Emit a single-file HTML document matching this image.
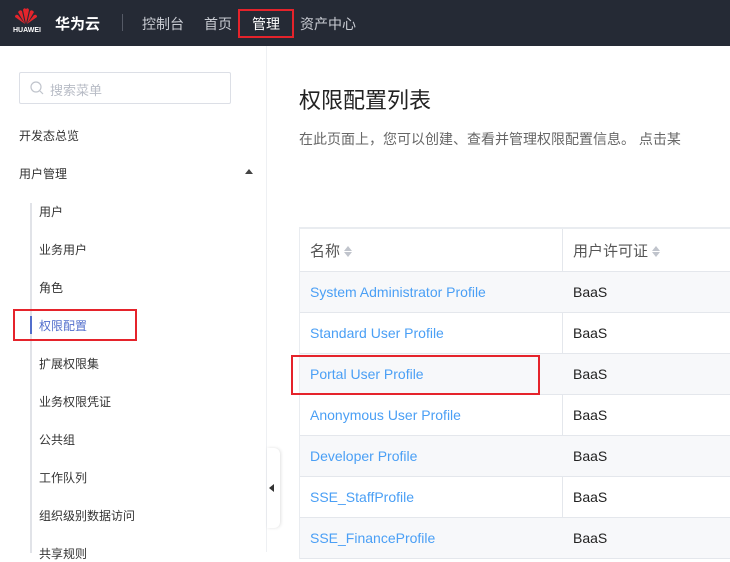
<!DOCTYPE html>
<html><head><meta charset="utf-8"><style>
*{margin:0;padding:0;box-sizing:border-box}
body{width:730px;height:552px;overflow:hidden;background:#fff;font-family:"Liberation Sans","Noto Sans CJK SC",sans-serif;position:relative}
.hd{position:absolute;left:0;top:0;width:730px;height:46px;background:#252a35;color:#c9ccd3;font-size:14px}
.hd span{position:absolute;top:14px}
.sb{position:absolute;left:0;top:46px;width:267px;height:506px;background:#fff;border-right:1px solid #eef0f3}
.it{position:absolute;font-size:12px;color:#333}
.red{position:absolute;border:2px solid #e5232b}
.tbl{position:absolute;left:299px;top:227px;width:431px;border-top:2px solid #e9ecf0;border-left:1px solid #e9ecf0}
.r{height:41px;border-bottom:1px solid #e4e7ec;position:relative;font-size:14px}
.r.g{background:#f7f8fa}
.r div{position:absolute;top:12px}
.c1{left:10px;color:#4a9ff5}
.c2{left:273px;color:#222}
.vl{position:absolute;left:262px;top:0;bottom:0;border-left:1px solid #e4e7ec}
.srt{display:inline-block;vertical-align:middle;margin-left:4px;width:9px;height:12px;position:relative}
.srt:before{content:"";position:absolute;left:0;top:0;border:4.5px solid transparent;border-bottom:5px solid #c0c4cc;border-top:0}
.srt:after{content:"";position:absolute;left:0;top:6px;border:4.5px solid transparent;border-top:5px solid #c0c4cc;border-bottom:0}
</style></head><body>
<div class="hd">
<svg style="position:absolute;left:13px;top:6px" width="26" height="20" viewBox="0 0 26 20"><g fill="#e4252c"><path d="M13 18 L10 4 Q11 1 13 3Z"/><path d="M13 18 L16 4 Q15 1 13 3Z"/><path d="M12 18 L5 6 Q7 3 9 5Z"/><path d="M14 18 L21 6 Q19 3 17 5Z"/><path d="M12 18 L2 11 Q2 8 5 9Z"/><path d="M14 18 L24 11 Q24 8 21 9Z"/></g></svg>
<div style="position:absolute;left:13px;top:27px;font-size:7px;font-weight:bold;color:#fff">HUAWEI</div>
<span style="left:55px;top:13px;color:#fff;font-weight:bold;font-size:15px">华为云</span>
<div style="position:absolute;left:122px;top:14px;width:1px;height:17px;background:#555a66"></div>
<span style="left:142px">控制台</span>
<span style="left:204px">首页</span>
<span style="left:252px;color:#fff">管理</span>
<span style="left:300px">资产中心</span>
</div>
<div class="red" style="left:238px;top:9px;width:56px;height:29px"></div>
<div class="sb">
<div style="position:absolute;left:19px;top:26px;width:212px;height:32px;border:1px solid #dcdfe6;border-radius:2px"></div>
<svg style="position:absolute;left:30px;top:35px" width="14" height="14"><circle cx="6" cy="6" r="5" fill="none" stroke="#c0c4cc" stroke-width="1.2"/><path d="M10 10l3 3" stroke="#c0c4cc" stroke-width="1.2"/></svg>
<div class="it" style="left:50px;top:34px;color:#b8bcc6;font-size:13px">搜索菜单</div>
<div class="it" style="left:19px;top:81px">开发态总览</div>
<div class="it" style="left:19px;top:119px">用户管理</div>
<div style="position:absolute;left:245px;top:123px;border:4px solid transparent;border-bottom:5px solid #444;border-top:0"></div>
<div style="position:absolute;left:30px;top:157px;width:2px;height:350px;background:#e1e3e8"></div>
<div style="position:absolute;left:30px;top:270px;width:2px;height:18px;background:#526ecc"></div>
<div class="it" style="left:39px;top:157px">用户</div>
<div class="it" style="left:39px;top:195px">业务用户</div>
<div class="it" style="left:39px;top:233px">角色</div>
<div class="it" style="left:39px;top:271px;color:#526ecc">权限配置</div>
<div class="it" style="left:39px;top:309px">扩展权限集</div>
<div class="it" style="left:39px;top:347px">业务权限凭证</div>
<div class="it" style="left:39px;top:385px">公共组</div>
<div class="it" style="left:39px;top:423px">工作队列</div>
<div class="it" style="left:39px;top:461px">组织级别数据访问</div>
<div class="it" style="left:39px;top:499px">共享规则</div>
</div>
<div class="red" style="left:13px;top:309px;width:124px;height:32px"></div>
<div style="position:absolute;left:267px;top:448px;width:13px;height:80px;background:#fff;border-radius:0 6px 6px 0;box-shadow:1px 0 3px rgba(0,0,0,.12)"></div>
<div style="position:absolute;left:269px;top:484px;border:4px solid transparent;border-right:5px solid #333;border-left:0"></div>
<div style="position:absolute;left:299px;top:83px;font-size:22px;color:#222">权限配置列表</div>
<div style="position:absolute;left:299px;top:129px;font-size:14px;color:#666;white-space:nowrap">在此页面上，您可以创建、查看并管理权限配置信息。 点击某</div>
<div class="tbl">
<div class="vl"></div>
<div class="r" style="height:43px;font-size:15px;color:#555"><div style="left:10px;top:11px">名称<span class="srt"></span></div><div style="left:273px;top:11px">用户许可证<span class="srt"></span></div></div>
<div class="r g"><div class="c1">System Administrator Profile</div><div class="c2">BaaS</div></div>
<div class="r"><div class="c1">Standard User Profile</div><div class="c2">BaaS</div></div>
<div class="r g"><div class="c1">Portal User Profile</div><div class="c2">BaaS</div></div>
<div class="r"><div class="c1">Anonymous User Profile</div><div class="c2">BaaS</div></div>
<div class="r g"><div class="c1">Developer Profile</div><div class="c2">BaaS</div></div>
<div class="r"><div class="c1">SSE_StaffProfile</div><div class="c2">BaaS</div></div>
<div class="r g"><div class="c1">SSE_FinanceProfile</div><div class="c2">BaaS</div></div>
</div>
<div class="red" style="left:291px;top:355px;width:249px;height:40px"></div>
</body></html>
